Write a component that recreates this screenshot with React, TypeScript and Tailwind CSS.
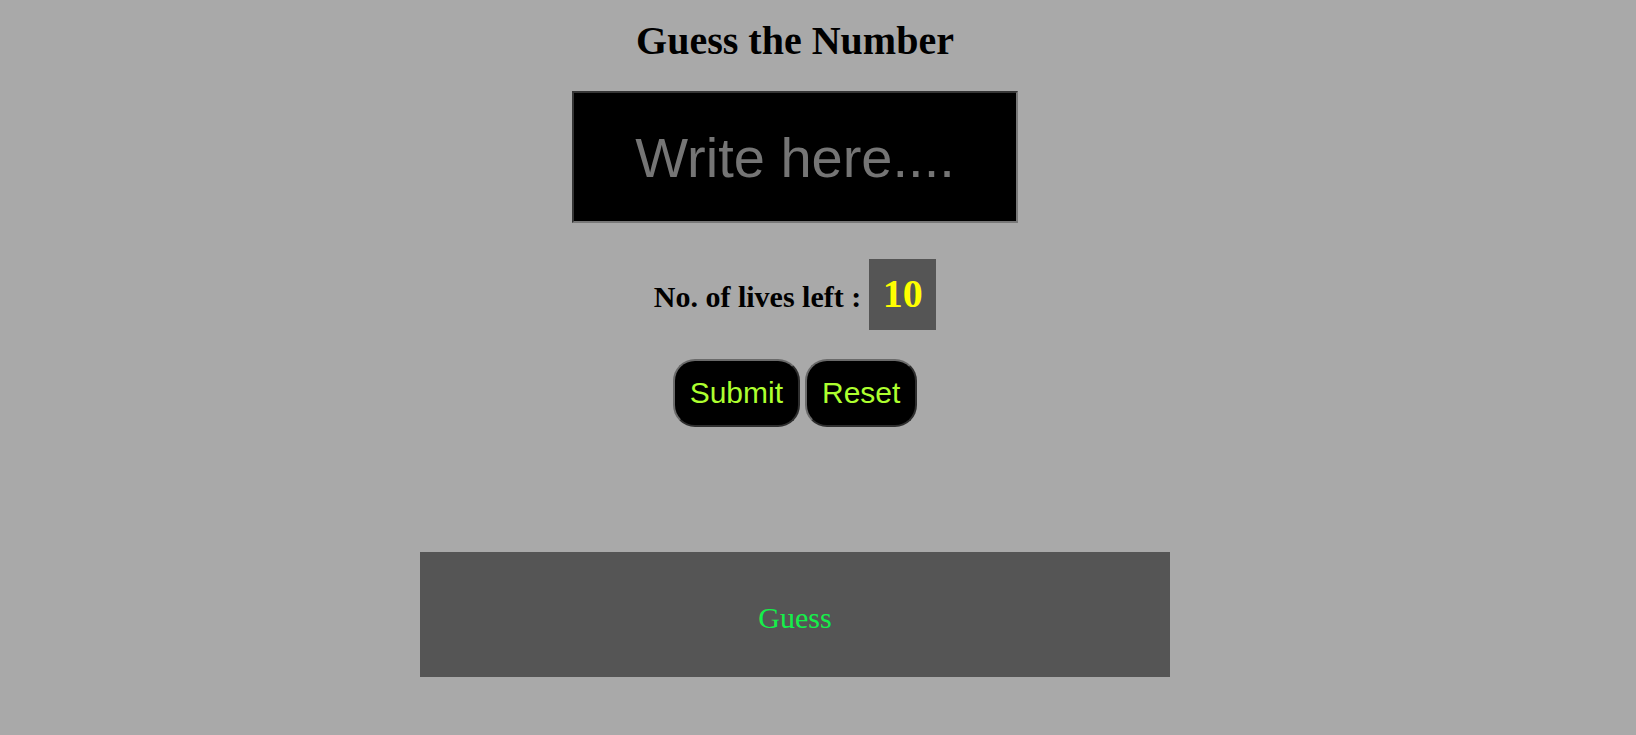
import React from "react";

export default function App() {
  return (
    <div
      className="min-h-screen w-full bg-[#a9a9a9]"
      style={{ fontFamily: '"Liberation Serif", "Times New Roman", serif' }}
    >
      <div className="w-[1590px] flex flex-col items-center">
        <h1 className="mt-[19px] text-[40px] leading-[44px] font-bold text-black font-['Liberation_Serif',serif]">
          Guess the Number
        </h1>

        <input
          type="text"
          placeholder="Write here...."
          className="mt-[28px] w-[446px] h-[132px] bg-black text-center text-[56px] text-white outline-none border-2 border-solid border-t-[#363636] border-l-[#363636] border-b-[#787878] border-r-[#787878] placeholder:text-[#757575] font-['Liberation_Sans',Arial,sans-serif]"
        />

        <div className="mt-[36px] flex items-baseline">
          <span className="text-[30px] font-bold text-black font-['Liberation_Serif',serif]">
            No. of lives left :
          </span>
          <span className="ml-[8px] block w-[67px] h-[71px] pt-[12px] bg-[#555555] text-center text-[40px] leading-[46px] font-bold text-[#ffff00] font-['Liberation_Serif',serif]">
            10
          </span>
        </div>

        <div className="mt-[29px] flex gap-[5px]">
          <button className="h-[68px] px-[15px] pb-[2px] rounded-[22px] bg-black text-[#adff2f] text-[30px] border-2 border-solid border-t-[#6a6a6a] border-l-[#6a6a6a] border-b-[#2e2e2e] border-r-[#2e2e2e] font-['Liberation_Sans',Arial,sans-serif]">
            Submit
          </button>
          <button className="h-[68px] px-[15px] pb-[2px] rounded-[22px] bg-black text-[#adff2f] text-[30px] border-2 border-solid border-t-[#6a6a6a] border-l-[#6a6a6a] border-b-[#2e2e2e] border-r-[#2e2e2e] font-['Liberation_Sans',Arial,sans-serif]">
            Reset
          </button>
        </div>

        <div className="mt-[125px] w-[750px] h-[125px] bg-[#555555] pt-[43px] text-center">
          <p className="text-[30px] text-[#14f04a] font-['Liberation_Serif',serif]">Guess</p>
        </div>
      </div>
    </div>
  );
}
